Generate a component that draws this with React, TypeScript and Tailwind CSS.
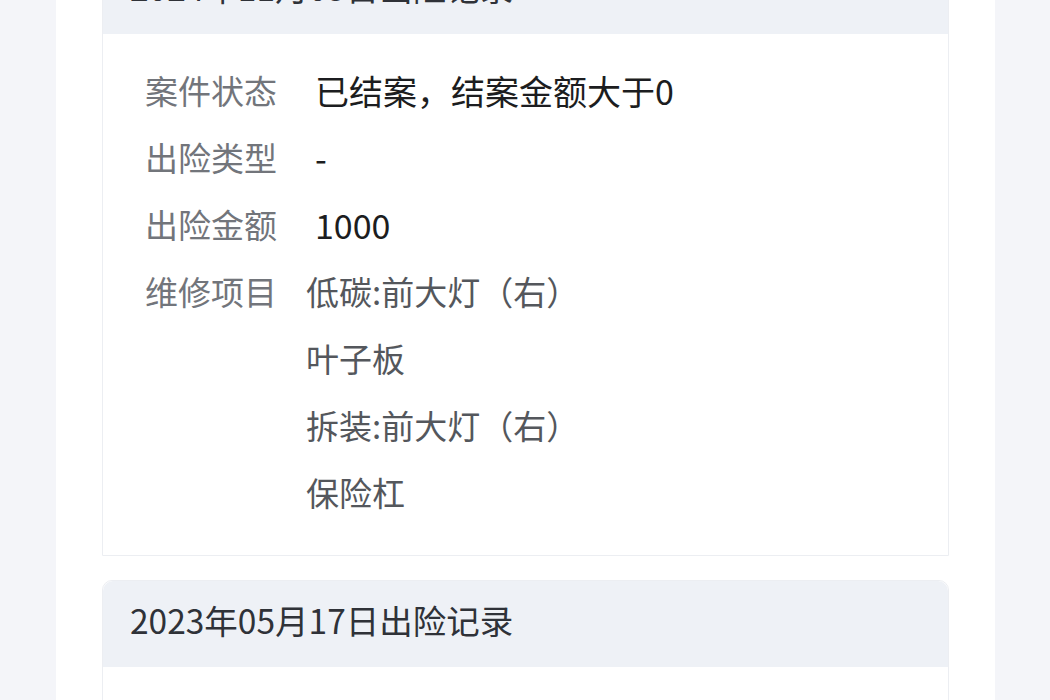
import React from 'react'

interface Row {
  label: string
  values: string[]
  list?: boolean
}

interface Record {
  title: string
  rows: Row[]
}

const records: Record[] = [
  {
    title: '2024年11月05日出险记录',
    rows: [
      { label: '案件状态', values: ['已结案，结案金额大于0'] },
      { label: '出险类型', values: ['-'] },
      { label: '出险金额', values: ['1000'] },
      {
        label: '维修项目',
        values: ['低碳:前大灯（右）', '叶子板', '拆装:前大灯（右）', '保险杠'],
        list: true
      }
    ]
  },
  {
    title: '2023年05月17日出险记录',
    rows: [
      { label: '案件状态', values: ['已结案，结案金额大于0'] },
      { label: '出险类型', values: ['-'] }
    ]
  }
]

function RecordCard({ record }: { record: Record }) {
  return (
    <div className="rounded-t-[10px] border border-[#eceef2] bg-white">
      {/* Header */}
      <div className="h-[86px] flex items-center rounded-t-[10px] bg-[#eef1f6] pl-[27px] pb-[8px] text-[33.5px] text-[#2f3238]">
        {record.title}
      </div>

      <div className="pt-[23px] pb-[29px] pl-[42px]">
        {record.rows.map((row) => (
          <div key={row.label} className="flex">
            <div className="w-[161px] shrink-0 h-[67px] leading-[67px] text-[33px] text-[#72757b]">
              {row.label}
            </div>
            <div className={row.list ? '' : 'pl-[9px]'}>
              {row.values.map((v) => (
                <div
                  key={v}
                  className={`h-[67px] leading-[67px] ${
                    row.list ? 'text-[33px] text-[#54575c]' : 'text-[34px] text-[#1c1d20]'
                  }`}
                >
                  {v}
                </div>
              ))}
            </div>
          </div>
        ))}
      </div>
    </div>
  )
}

export default function App() {
  return (
    <div
      className="h-[700px] overflow-hidden bg-[#f4f5f9] flex justify-center"
      style={{ fontFamily: '"Noto Sans CJK SC", "Noto Sans", sans-serif' }}
    >
      <div className="w-[939px] ml-[1px] bg-white px-[46px]">
        <div className="-mt-[53px] flex flex-col gap-[24px]">
          {records.map((r) => (
            <RecordCard key={r.title} record={r} />
          ))}
        </div>
      </div>
    </div>
  )
}
